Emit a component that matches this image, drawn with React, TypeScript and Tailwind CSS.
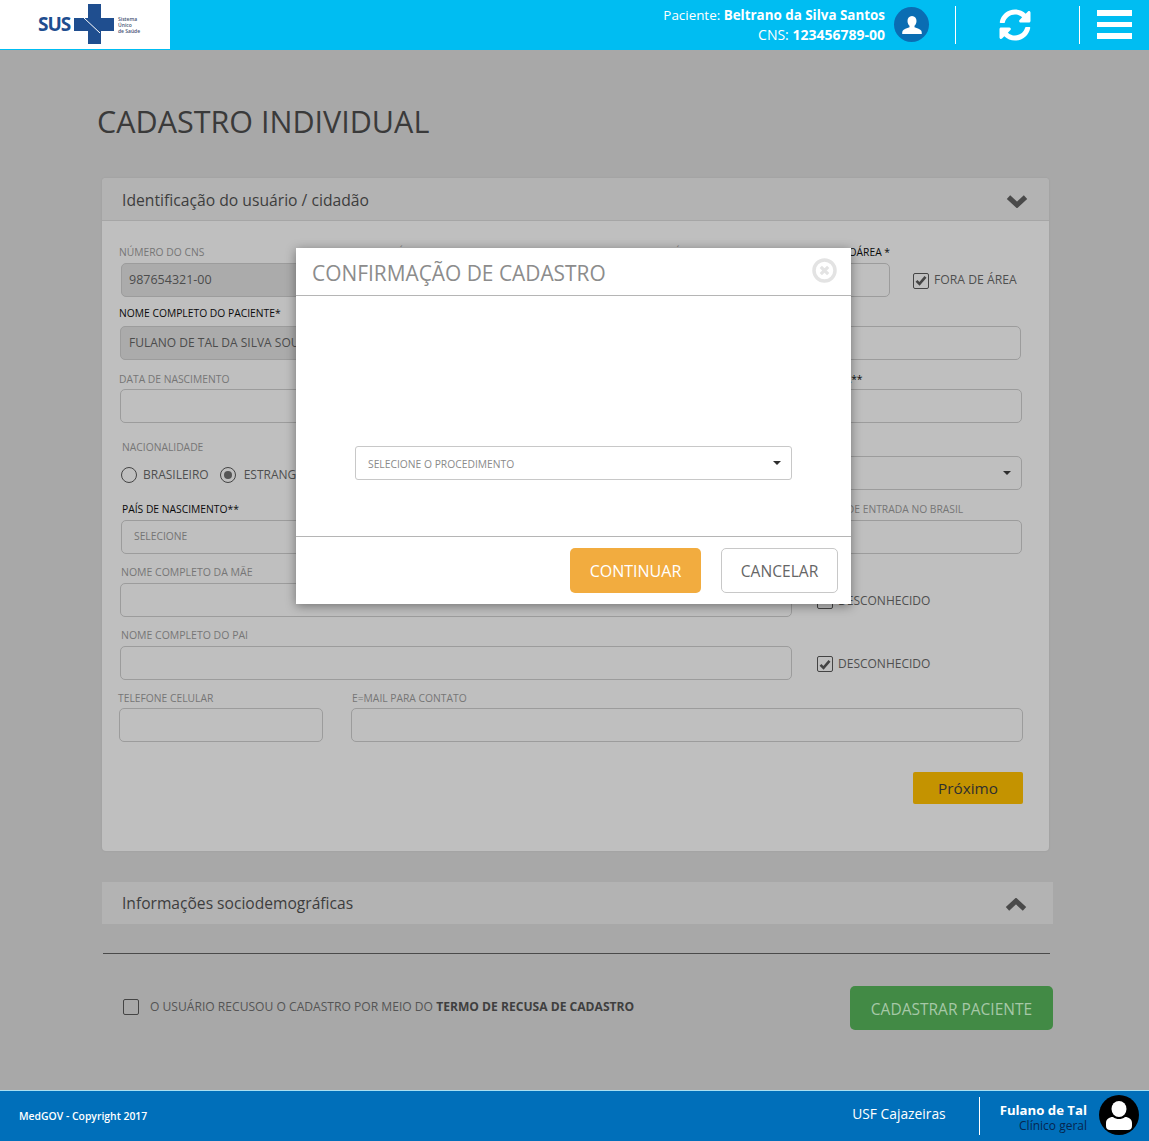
const FONT = "font-['Open_Sans','Noto_Sans',sans-serif]";

function Label({ children, dark, className = "" }: { children: React.ReactNode; dark?: boolean; className?: string }) {
  return (
    <div className={`h-[14px] text-[10.3px] leading-[14px] whitespace-nowrap ${dark ? "text-[#0b0b0b]" : "text-[#767676]"} ${className}`}>
      {children}
    </div>
  );
}

function Box({ children, filled, className = "" }: { children?: React.ReactNode; filled?: boolean; className?: string }) {
  return (
    <div
      className={`flex h-[34px] items-center overflow-hidden whitespace-nowrap rounded-[5px] border border-[#9c9c9c] text-[#4c4c4c] ${filled ? "bg-[#ababab]" : ""} ${className}`}
    >
      {children}
    </div>
  );
}

function Check({ checked, label, className = "" }: { checked?: boolean; label: string; className?: string }) {
  return (
    <div className={`flex items-center gap-[5px] text-[#4f4f4f] ${className}`}>
      <span className="flex h-[16px] w-[16px] items-center justify-center rounded-[2px] border border-[#444444]">
        {checked && (
          <svg width="12" height="11" viewBox="0 0 12 11">
            <path d="M1.5 5.8l3 3 6-7" fill="none" stroke="#444444" strokeWidth="2.6" />
          </svg>
        )}
      </span>
      {label}
    </div>
  );
}

function Caret({ className = "" }: { className?: string }) {
  return <span className={`h-0 w-0 border-x-[4px] border-t-[4px] border-x-transparent border-t-[#2e2e2e] ${className}`} />;
}

function Chevron({ up }: { up?: boolean }) {
  return (
    <svg width="22" height="14" viewBox="0 0 22 14" className={`mt-[3px] ${up ? "rotate-180" : ""}`}>
      <path d="M2.5 3.2L11 11l8.5-7.8" fill="none" stroke="#4a4a4a" strokeWidth="5" />
    </svg>
  );
}

function Logo() {
  return (
    <div className="flex h-[49px] w-[170px] shrink-0 items-center bg-white pl-[38px]">
      <span className="w-[36px] text-[19px] font-bold leading-none tracking-[-1px] text-[#1f4e8f]">SUS</span>
      <svg width="40" height="40" viewBox="0 0 40 40" className="-mt-[2px] shrink-0">
        <path d="M14 0h13v14h13v13H27v13H14V27H0V14h14z" fill="#1f4e8f" />
        <path d="M10 14l16 15" stroke="#ffffff" strokeWidth="1" fill="none" />
      </svg>
      <span className="ml-[4px] text-[5px] font-semibold leading-[6px] text-[#3f5272]">
        Sistema
        <br />
        Único
        <br />
        de Saúde
      </span>
    </div>
  );
}

function Header() {
  return (
    <header className="flex h-[50px] shrink-0 bg-[#00bdf2]">
      <Logo />
      <div className="flex h-[49px] flex-1 items-center justify-end">
        <div className="text-right leading-[19px] text-white">
          <div className="text-[13.4px]">
            Paciente: <b className="font-bold">Beltrano da Silva Santos</b>
          </div>
          <div className="text-[14px]">
            CNS: <b className="font-bold">123456789-00</b>
          </div>
        </div>
        <span className="ml-[9px] flex h-[35px] w-[35px] items-center justify-center rounded-full bg-[#0a6db3]">
          <svg width="20" height="18" viewBox="0 0 20 18">
            <path
              d="M10 0c2.9 0 4.500 2.200 4.500 5 0 2-.9 3.800-2 4.800v1.400c2.600 1 6 2 6.800 3.600.3.600.5 1.600.5 3.200H.2c0-1.600.2-2.600.5-3.200.8-1.600 4.200-2.600 6.800-3.600V9.800c-1.100-1-2-2.800-2-4.800 0-2.800 1.600-5 4.500-5z"
              fill="#ffffff"
            />
          </svg>
        </span>
        <span className="ml-[26px] h-[38px] w-px bg-white" />
        <span className="flex w-[123px] justify-center pr-[5px]">
          <svg width="32" height="32" viewBox="0 0 512 512">
            <path
              fill="#ffffff"
              d="M370.72 133.28C339.458 104.008 298.888 87.962 255.848 88c-77.458.068-144.328 53.178-162.791 126.85-1.344 5.363-6.122 9.15-11.651 9.15H24.103c-7.498 0-13.194-6.807-11.807-14.176C33.933 94.924 134.813 8 256 8c66.448 0 126.791 26.136 171.315 68.685L463.03 40.97C478.149 25.851 504 36.559 504 57.941V192c0 13.255-10.745 24-24 24H345.941c-21.382 0-32.09-25.851-16.971-40.971l41.75-41.749zM32 296h134.059c21.382 0 32.09 25.851 16.971 40.971l-41.75 41.75c31.262 29.273 71.835 45.319 114.876 45.28 77.418-.07 144.315-53.144 162.787-126.849 1.344-5.363 6.122-9.15 11.651-9.15h57.304c7.498 0 13.194 6.807 11.807 14.176C478.067 417.076 377.187 504 256 504c-66.448 0-126.791-26.136-171.315-68.685L48.97 471.03C33.851 486.149 8 475.441 8 454.059V320c0-13.255 10.745-24 24-24z"
            />
          </svg>
        </span>
        <span className="h-[38px] w-px bg-white" />
        <span className="ml-[17px] mr-[17px] flex w-[35px] flex-col gap-[6px]">
          <span className="h-[6px] bg-white" />
          <span className="h-[5px] bg-white" />
          <span className="h-[6px] bg-white" />
        </span>
      </div>
    </header>
  );
}

function IdentificacaoPanel() {
  return (
    <section className="ml-[102px] mt-[35px] w-[947px] rounded-[4px] bg-[#bfbfbf] shadow-[0_0_2px_rgba(0,0,0,0.1)]">
      <div className="flex h-[43px] items-center justify-between rounded-t-[4px] border-b border-[#a6a6a6] bg-[#b3b3b3] pl-[20px] pr-[21px] text-[15.7px] text-[#3d3d3d]">
        <span className="pt-[3px]">Identificação do usuário / cidadão</span>
        <Chevron />
      </div>

      <div className="pb-[47px] pt-[24px]">
        <div className="flex pl-[17px]">
          <div className="w-[202px]">
            <Label>NÚMERO DO CNS</Label>
            <Box filled className="ml-[2px] mt-[4px] w-[190px] px-[7px] text-[12.5px]">987654321-00</Box>
          </div>
          <div className="w-[286px]">
            <Label>UNIDADE DE SAÚDE</Label>
            <Box className="mt-[4px] w-[200px]" />
          </div>
          <div className="w-[210px]">
            <Label>EQUIPE DE SAÚDE</Label>
            <Box className="mt-[4px] w-[180px]" />
          </div>
          <div className="w-[96px]">
            <Label dark className="flex justify-end pr-[23px]">MICROÁREA *</Label>
            <Box className="mt-[4px] w-[73px]" />
          </div>
          <Check checked label="FORA DE ÁREA" className="mt-[19px] text-[12.2px]" />
        </div>

        <div className="mt-[9px] pl-[17px]">
          <Label dark>NOME COMPLETO DO PACIENTE*</Label>
          <div className="ml-[1px] mt-[6px] flex w-[901px] justify-between">
            <Box filled className="w-[420px] px-2 text-[12px]">FULANO DE TAL DA SILVA SOUZA</Box>
            <Box className="w-[461px]" />
          </div>
        </div>

        <div className="mt-[12px] flex pl-[17px]">
          <div className="w-[635px]">
            <Label>DATA DE NASCIMENTO</Label>
            <Box className="ml-[1px] mt-[3px] w-[400px]" />
          </div>
          <div>
            <Label dark>PAÍS DE RESIDÊNCIA**</Label>
            <Box className="mt-[3px] w-[268px]" />
          </div>
        </div>

        <div className="mt-[17px] flex pl-[20px]">
          <div className="w-[438px]">
            <Label>NACIONALIDADE</Label>
            <div className="mt-[12px] flex items-center text-[12px] text-[#4f4f4f]">
              <span className="-ml-[1px] h-[16px] w-[16px] rounded-full border border-[#444444]" />
              <span className="ml-[6px]">BRASILEIRO</span>
              <span className="ml-[11px] flex h-[16px] w-[16px] items-center justify-center rounded-full border border-[#444444]">
                <span className="h-[8px] w-[8px] rounded-full bg-[#555555]" />
              </span>
              <span className="ml-[8px]">ESTRANGEIRO</span>
            </div>
          </div>
          <Box className="mt-[16px] w-[462px] justify-end pr-[10px]">
            <Caret />
          </Box>
        </div>

        <div className="mt-[12px] flex pl-[19px]">
          <div className="w-[697px]">
            <Label className="ml-[1px]" dark>PAÍS DE NASCIMENTO**</Label>
            <Box className="mt-[4px] w-[420px] pl-[12px] text-[10.3px] text-[#747474]">SELECIONE</Box>
          </div>
          <div>
            <Label>DATA DE ENTRADA NO BRASIL</Label>
            <Box className="mt-[4px] w-[204px]" />
          </div>
        </div>

        <div className="mt-[11px] flex pl-[18px]">
          <div className="w-[697px]">
            <Label className="ml-[1px] text-[10.5px]">NOME COMPLETO DA MÃE</Label>
            <Box className="mt-[4px] w-[672px]" />
          </div>
          <Check label="DESCONHECIDO" className="mt-[20px] text-[12px]" />
        </div>

        <div className="mt-[11px] flex pl-[18px]">
          <div className="w-[697px]">
            <Label className="ml-[1px] text-[10.5px]">NOME COMPLETO DO PAI</Label>
            <Box className="mt-[4px] w-[672px]" />
          </div>
          <Check checked label="DESCONHECIDO" className="mt-[20px] text-[12px]" />
        </div>

        <div className="mt-[11px] flex pl-[16px]">
          <div className="w-[233px]">
            <Label>TELEFONE CELULAR</Label>
            <Box className="ml-[1px] mt-[3px] w-[204px]" />
          </div>
          <div>
            <Label className="ml-[1px]">E=MAIL PARA CONTATO</Label>
            <Box className="mt-[3px] w-[672px]" />
          </div>
        </div>

        <div className="mt-[30px] flex justify-end pr-[26px]">
          <div className="flex h-[32px] w-[110px] items-center justify-center rounded-[2px] bg-[#c49300] text-[15.3px] text-[#2f2f2f]">
            Próximo
          </div>
        </div>
      </div>
    </section>
  );
}

function ConfirmModal() {
  return (
    <div className="absolute left-[296px] top-[248px] z-10 h-[356px] w-[555px] bg-white shadow-[0_2px_10px_rgba(0,0,0,0.4)]">
      <div className="flex h-[48px] items-center justify-between border-b border-[#b5b5b5] pl-[16px] pr-[14px] text-[20.9px] text-[#8c8c8c]">
        <span className="pt-[5px]">CONFIRMAÇÃO DE CADASTRO</span>
        <svg width="25" height="25" viewBox="0 0 25 25" className="-mt-[2px]">
          <circle cx="12.5" cy="12.5" r="10.5" fill="none" stroke="#e3e3e3" strokeWidth="3.5" />
          <path d="M8.8 8.8l7.4 7.4M16.2 8.8l-7.4 7.4" stroke="#e3e3e3" strokeWidth="3.2" />
        </svg>
      </div>
      <div className="flex h-[241px] items-start border-b border-[#b5b5b5] pl-[59px] pt-[150px]">
        <div className="flex h-[34px] w-[437px] items-center justify-between rounded-[3px] border border-[#c8c8c8] pl-[12px] pr-[10px] text-[10.3px] text-[#8a8a8a]">
          <span className="pt-[3px]">SELECIONE O PROCEDIMENTO</span>
          <Caret />
        </div>
      </div>
      <div className="flex justify-end gap-[20px] pr-[13px] pt-[11px]">
        <div className="flex h-[45px] w-[131px] items-center justify-center rounded-[5px] bg-[#f2ac3f] text-[16px] text-white">
          CONTINUAR
        </div>
        <div className="flex h-[45px] w-[117px] items-center justify-center rounded-[5px] border border-[#c8c8c8] pt-[2px] text-[15.6px] text-[#666666]">
          CANCELAR
        </div>
      </div>
    </div>
  );
}

function Footer() {
  return (
    <footer className="flex h-[51px] shrink-0 items-center border-t border-[#a8dff2] bg-[#006fba] pl-[19px] text-white">
      <span className="pt-[2px] text-[10.4px] font-semibold">MedGOV - Copyright 2017</span>
      <span className="-mt-[3px] ml-auto text-[13.8px] font-medium">USF Cajazeiras</span>
      <span className="ml-[33px] h-[38px] w-px bg-white" />
      <div className="ml-[20px] text-right">
        <div className="text-[13.2px] font-bold leading-[18px]">Fulano de Tal</div>
        <div className="text-[12px] leading-[13px] text-[#06264f]">Clínico geral</div>
      </div>
      <span className="-mt-[2px] ml-[12px] mr-[10px] flex h-[40px] w-[40px] items-center justify-center rounded-full bg-black">
        <svg width="26" height="29" viewBox="0 0 26 29">
          <ellipse cx="13" cy="8" rx="7.5" ry="8" fill="#ffffff" />
          <path d="M7 16c-4 0-7 2.500-7 6v3c0 2.500 1.500 4 4 4h18c2.500 0 4-1.500 4-4v-3c0-3.500-3-6-7-6-1.800 1.500-3.800 2-6 2s-4.200-.5-6-2z" fill="#ffffff" />
        </svg>
      </span>
    </footer>
  );
}

export default function App() {
  return (
    <div className={`relative flex h-[1141px] w-[1149px] flex-col overflow-hidden bg-[#a8a8a8] ${FONT}`}>
      <Header />
      <main className="flex-1">
        <h1 className="ml-[97px] mt-[49px] text-[30.5px] font-normal leading-[44px] text-[#3a3a3a]">CADASTRO INDIVIDUAL</h1>

        <IdentificacaoPanel />

        <section className="ml-[102px] mt-[31px] flex h-[42px] w-[951px] items-center justify-between bg-[#b3b3b3] pl-[20px] pr-[26px] text-[15.6px] text-[#3d3d3d]">
          <span className="pt-[2px]">Informações sociodemográficas</span>
          <Chevron up />
        </section>

        <div className="ml-[103px] mt-[29px] h-px w-[947px] bg-[#4a4a4a]" />

        <div className="ml-[123px] mt-[32px] flex w-[930px] items-start justify-between">
          <div className="mt-[12px] flex items-center gap-[11px] text-[12.1px] text-[#545454]">
            <span className="h-[16px] w-[16px] rounded-[2px] border border-[#444444]" />
            <span>
              O USUÁRIO RECUSOU O CADASTRO POR MEIO DO <b className="font-bold text-[#3f3f3f]">TERMO DE RECUSA DE CADASTRO</b>
            </span>
          </div>
          <div className="flex h-[44px] w-[203px] items-center justify-center rounded-[5px] bg-[#428a45] pt-[3px] text-[15.5px] text-[#a6c8a7]">
            CADASTRAR PACIENTE
          </div>
        </div>
      </main>
      <Footer />
      <ConfirmModal />
    </div>
  );
}
